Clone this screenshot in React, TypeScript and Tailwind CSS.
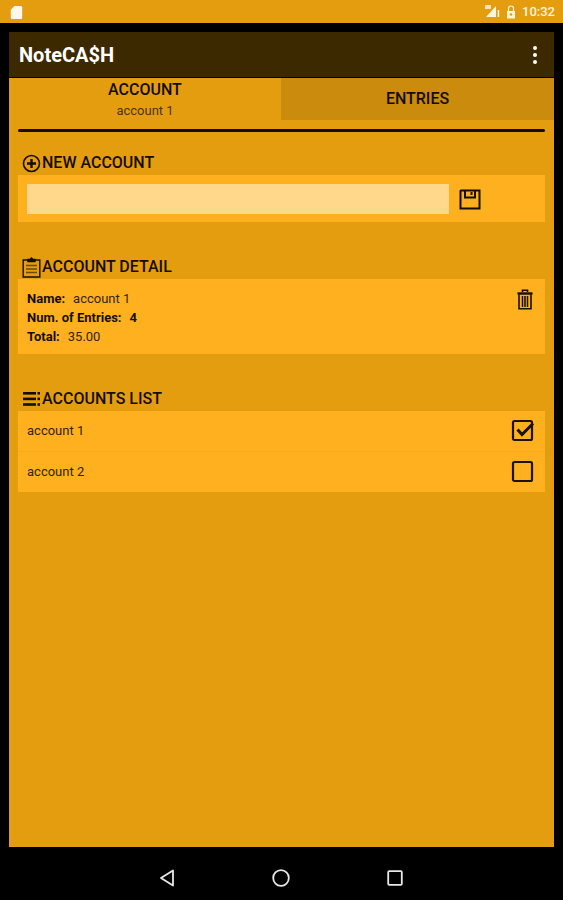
const FONT = "font-['Roboto',sans-serif]"

function SectionTitle({ icon, label, className }: { icon: React.ReactNode; label: string; className: string }) {
  return (
    <div className={`flex items-center h-6 pl-[3px] gap-px ${className}`}>
      <span className="w-5 h-5 flex items-center justify-center shrink-0">{icon}</span>
      <span className="text-[16px] font-medium text-[#140d00] leading-none">{label}</span>
    </div>
  )
}

function PlusIcon() {
  return (
    <svg width="19" height="19" viewBox="0 0 19 19" fill="none" stroke="#140d00" strokeWidth="1.6">
      <circle cx="9.5" cy="9.5" r="8" />
      <path d="M9.5 5v9M5 9.5h9" strokeWidth="2.4" />
    </svg>
  )
}

function ClipboardIcon() {
  return (
    <svg width="19" height="21" viewBox="0 0 19 21" fill="none" stroke="#140d00" strokeWidth="1.4">
      <path d="M6 3H1.2v17h16.6V3H13" />
      <path d="M6 4.5V2.5h2l1.5-1.5L11 2.5h2v2z" fill="#140d00" />
      <path d="M4 8.5h11M4 12h11M4 15.5h11" stroke="#6b4a08" strokeWidth="1.5" />
    </svg>
  )
}

function ListIcon() {
  return (
    <svg width="17" height="16" viewBox="0 0 17 16" fill="#140d00">
      <rect x="0" y="1" width="13" height="2.6" />
      <rect x="0" y="6.6" width="13" height="2.6" />
      <rect x="0" y="12.2" width="13" height="2.6" />
      <rect x="14.5" y="1" width="2.5" height="2.6" />
      <rect x="14.5" y="6.6" width="2.5" height="2.6" />
      <rect x="14.5" y="12.2" width="2.5" height="2.6" />
    </svg>
  )
}

function SaveIcon() {
  return (
    <svg width="22" height="21" viewBox="0 0 22 21" fill="none" stroke="#140d00" strokeWidth="2">
      <path d="M2 1.5h18.5a0 0 0 0 1 0 0V19.5H1.5V2z" />
      <path d="M6 1.5v7h10v-7" />
      <path d="M12.5 3v3" strokeWidth="2" />
    </svg>
  )
}

function TrashIcon() {
  return (
    <svg width="16" height="21" viewBox="0 0 16 21" fill="none" stroke="#140d00" strokeWidth="1.6">
      <path d="M0.5 4.5h15" strokeWidth="2.4" />
      <path d="M5.5 3V1.2h5V3" strokeWidth="1.6" />
      <path d="M2 5.5v14.2h12V5.5" />
      <path d="M5.5 7v11M8 7v11M10.5 7v11" strokeWidth="1.5" />
    </svg>
  )
}

function Checkbox({ checked }: { checked?: boolean }) {
  return (
    <svg width="24" height="24" viewBox="0 0 24 24" fill="none" stroke="#1c1200" strokeWidth="2.2">
      <rect x="2" y="2" width="19" height="19" rx="1.5" />
      {checked && <path d="M6.5 10.5l4.5 5L22 4.5" strokeWidth="3" stroke="#1c1200" />}
    </svg>
  )
}

function AccountRow({ name, checked }: { name: string; checked?: boolean }) {
  return (
    <div className="h-10 flex items-center justify-between pl-[9px] pr-[10px]">
      <span className="text-[13px] text-[#33240a]">{name}</span>
      <Checkbox checked={checked} />
    </div>
  )
}

export default function App() {
  return (
    <div className={`${FONT} w-[563px] h-[900px] bg-black flex flex-col overflow-hidden`}>
      {/* Status bar */}
      <div className="h-[23px] bg-[#e59d10] flex items-center justify-between pl-[10px] pr-[8px] shrink-0">
        <svg width="13" height="14" viewBox="0 0 13 14" fill="#fff8ea">
          <path d="M4.5 1H11a1.2 1.2 0 0 1 1.2 1.2v10.6A1.2 1.2 0 0 1 11 14H2a1.2 1.2 0 0 1-1.2-1.2V4.7z" />
        </svg>
        <div className="flex items-center gap-[6px]">
          <svg width="15" height="13" viewBox="0 0 15 13" fill="#fff4dc">
            <path d="M11 1v11H1z" />
            <rect x="12.6" y="5" width="1.6" height="7" />
            <rect x="0" y="0" width="6" height="4" opacity="0.8" />
          </svg>
          <svg width="10" height="14" viewBox="0 0 10 14" fill="#fff4dc">
            <path d="M1 6h8v7.5H1z" />
            <path d="M2.5 6V3.5a2.5 2.5 0 0 1 5 0V6" fill="none" stroke="#fff4dc" strokeWidth="1.2" />
            <circle cx="5" cy="9.5" r="1.3" fill="#e59d10" />
          </svg>
          <span className="text-[13px] font-medium text-[#fff4dc] leading-none">10:32</span>
        </div>
      </div>

      {/* Window */}
      <div className="flex-1 min-h-0 pt-[9px] px-[9px] pb-[53px]">
        <div className="h-full flex flex-col bg-[#e59d10]">
          <div className="h-[45px] bg-[#3d2900] flex items-center justify-between pl-[10px] pr-[17px] shrink-0">
            <span className="text-[20px] font-bold text-white leading-none">NoteCA$H</span>
            <div className="flex flex-col gap-[3px]">
              <span className="w-[4px] h-[4px] rounded-full bg-white" />
              <span className="w-[4px] h-[4px] rounded-full bg-white" />
              <span className="w-[4px] h-[4px] rounded-full bg-white" />
            </div>
          </div>
          <div className="h-px bg-black shrink-0" />

          {/* Tabs */}
          <div className="flex h-[42px] shrink-0">
            <div className="w-[272px] flex flex-col items-center pt-[2px]">
              <span className="text-[16px] font-medium text-[#140d00] leading-5">ACCOUNT</span>
              <span className="text-[13px] text-[#4d3608] leading-5 mt-[1px]">account 1</span>
            </div>
            <div className="flex-1 bg-[#cb8b0c] flex items-center justify-center">
              <span className="text-[16px] font-medium text-[#140d00]">ENTRIES</span>
            </div>
          </div>

          <div className="px-[9px] mr-[0px]">
            <div className="h-[3px] bg-[#140d00] rounded-full mt-[9px]" />

            <SectionTitle icon={<PlusIcon />} label="NEW ACCOUNT" className="mt-[19px]" />
            <div className="h-[47px] mt-[0px] bg-[#ffb01f] flex items-center pl-[9px]">
              <div className="w-[422px] h-[30px] bg-[#ffd88c]" />
              <span className="ml-[10px] mt-[1px]"><SaveIcon /></span>
            </div>

            <SectionTitle icon={<ClipboardIcon />} label="ACCOUNT DETAIL" className="mt-[33px]" />
            <div className="h-[75px] bg-[#ffb01f] flex justify-between pl-[9px] pr-[12px] pt-[10px]">
              <div className="text-[13px] leading-[19px] text-[#33240a]">
                <p><span className="font-bold text-[#140d00] mr-[8px]">Name:</span>account 1</p>
                <p><span className="font-bold text-[#140d00] mr-[8px]">Num. of Entries:</span><span className="font-bold text-[#140d00]">4</span></p>
                <p><span className="font-bold text-[#140d00] mr-[8px]">Total:</span>35.00</p>
              </div>
              <TrashIcon />
            </div>

            <SectionTitle icon={<ListIcon />} label="ACCOUNTS LIST" className="mt-[33px]" />
            <div className="bg-[#ffb01f] flex flex-col">
              <AccountRow name="account 1" checked />
              <div className="h-px bg-[#f7aa1c]" />
              <AccountRow name="account 2" />
            </div>
          </div>
        </div>
      </div>

      {/* Nav bar icons */}
      <div className="absolute left-0 right-0 top-[847px] h-[53px] flex items-center justify-center gap-[97px] pt-[9px] pr-[1px]">
        <svg width="16" height="18" viewBox="0 0 16 18" fill="none" stroke="#e8e8e8" strokeWidth="1.8" strokeLinejoin="round">
          <path d="M14 1.5v15L2 9z" />
        </svg>
        <svg width="18" height="18" viewBox="0 0 18 18" fill="none" stroke="#e8e8e8" strokeWidth="1.8">
          <circle cx="9" cy="9" r="7.8" />
        </svg>
        <svg width="16" height="16" viewBox="0 0 16 16" fill="none" stroke="#e8e8e8" strokeWidth="1.8">
          <rect x="1.2" y="1.2" width="13.6" height="13.6" rx="1" />
        </svg>
      </div>
    </div>
  )
}
